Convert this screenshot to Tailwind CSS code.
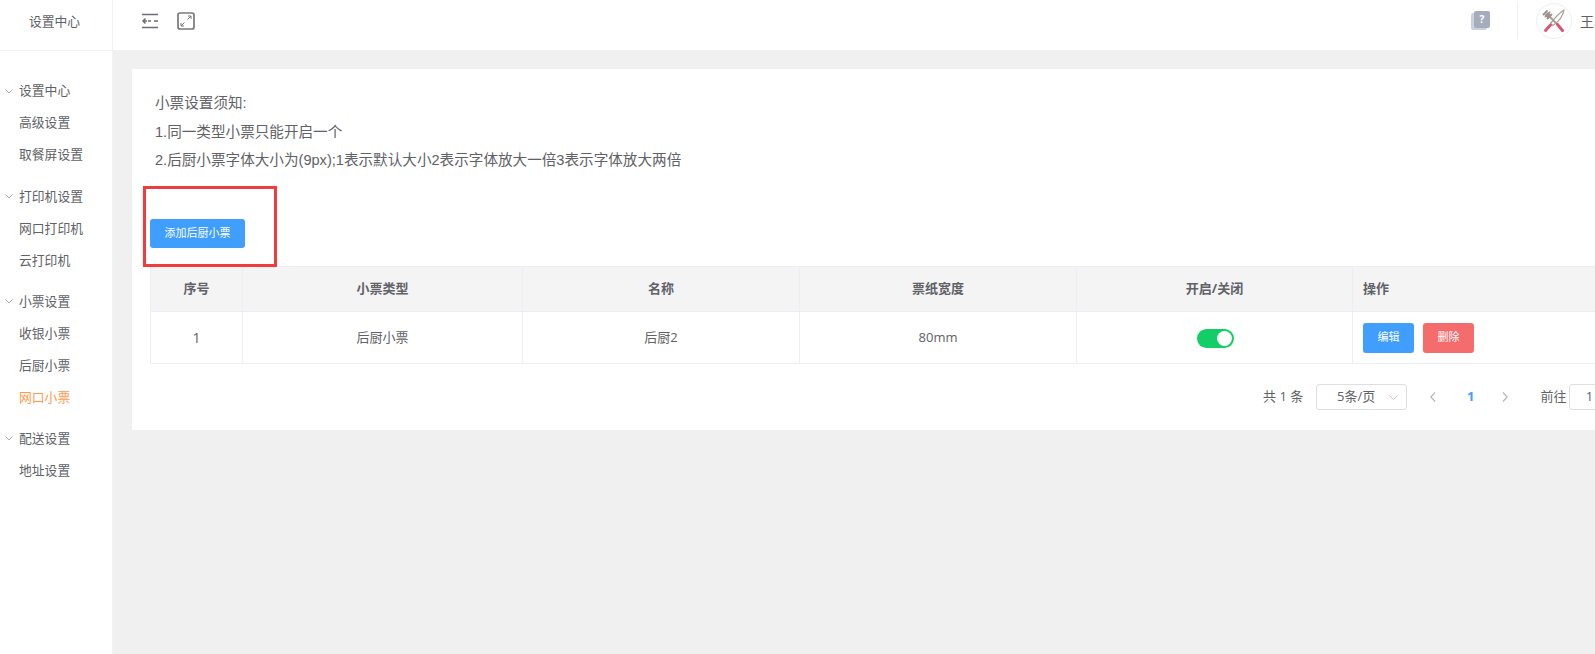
<!DOCTYPE html>
<html lang="zh">
<head>
  <meta charset="UTF-8" />
  <title>设置中心</title>
  <script src="https://cdn.jsdelivr.net/npm/@tailwindcss/browser@4"></script>
</head>
<body class="h-[654px] w-[1595px] overflow-hidden bg-[#f0f0f0] text-[#606266] font-['Open_Sans','Noto_Sans_CJK_SC',sans-serif]">
  <div class="flex h-[654px]">

    <!-- sidebar -->
    <aside class="w-[113px] shrink-0 bg-white border-r border-[#f2f2f2]">
      <div class="h-[51px] flex items-center justify-center pb-[7px] pr-[3px] text-[12.800px] border-b border-[#f2f2f2]">设置中心</div>
      <nav class="pt-[24px] flex flex-col gap-[9.300px] text-[12.800px]">
        <div>
          <div class="h-8 flex items-center gap-[6px] pl-[5px]">
            <svg class="w-[8px] h-[5px]" viewBox="0 0 8 5" fill="none" stroke="#a8abb2"><path d="M.5.5 4 4 7.5.5" /></svg>
            <span>设置中心</span>
          </div>
          <div class="h-8 flex items-center pl-[19px]">高级设置</div>
          <div class="h-8 flex items-center pl-[19px]">取餐屏设置</div>
        </div>
        <div>
          <div class="h-8 flex items-center gap-[6px] pl-[5px]">
            <svg class="w-[8px] h-[5px]" viewBox="0 0 8 5" fill="none" stroke="#a8abb2"><path d="M.5.5 4 4 7.5.5" /></svg>
            <span>打印机设置</span>
          </div>
          <div class="h-8 flex items-center pl-[19px]">网口打印机</div>
          <div class="h-8 flex items-center pl-[19px]">云打印机</div>
        </div>
        <div>
          <div class="h-8 flex items-center gap-[6px] pl-[5px]">
            <svg class="w-[8px] h-[5px]" viewBox="0 0 8 5" fill="none" stroke="#a8abb2"><path d="M.5.5 4 4 7.5.5" /></svg>
            <span>小票设置</span>
          </div>
          <div class="h-8 flex items-center pl-[19px]">收银小票</div>
          <div class="h-8 flex items-center pl-[19px]">后厨小票</div>
          <div class="h-8 flex items-center pl-[19px] text-[#ff9a4d]">网口小票</div>
        </div>
        <div>
          <div class="h-8 flex items-center gap-[6px] pl-[5px]">
            <svg class="w-[8px] h-[5px]" viewBox="0 0 8 5" fill="none" stroke="#a8abb2"><path d="M.5.5 4 4 7.5.5" /></svg>
            <span>配送设置</span>
          </div>
          <div class="h-8 flex items-center pl-[19px]">地址设置</div>
        </div>
      </nav>
    </aside>

    <div class="flex-1 min-w-0">
      <!-- top bar -->
      <header class="h-[50px] bg-white flex items-start">
        <svg class="ml-[28px] mt-[13px] w-[18px] h-[16px]" viewBox="0 0 18 16" fill="none" stroke="#6b6e74" stroke-width="1.500">
          <path d="M1 1.500h16M1 14.500h16M7 8h3M13 8h4M6 8H2M4.500 5.500 2 8l2.500 2.500" />
        </svg>
        <svg class="ml-[18px] mt-[12px] w-[18px] h-[18px]" viewBox="0 0 18 18" fill="none" stroke="#77797f">
          <rect x="1" y="1" width="16" height="16" rx="2" stroke-width="1.700" />
          <path d="M10.500 7.500 14 4M11 4h3v3M7.500 10.500 4 14M4 11v3h3" stroke-width="1" />
        </svg>
        <div class="ml-auto flex items-start">
          <div class="relative mt-[11px] w-[19px] h-[19px]">
            <div class="absolute left-0 top-[2px] w-[16px] h-[17px] rounded-[2px] bg-[#ccd2dc]"></div>
            <div class="absolute right-0 top-0 w-[16px] h-[17px] rounded-[2px] bg-[#a5adbd] text-white text-[10px] font-bold leading-[17px] text-center">?</div>
          </div>
          <div class="ml-[27px] mt-[3px] w-px h-[36px] bg-[#f0f0f0]"></div>
          <div class="ml-[18px] mt-[3px] w-[36px] h-[36px] rounded-full border border-[#eeeeee] flex items-center justify-center">
            <svg class="w-[28px] h-[28px]" viewBox="0 0 28 28" fill="none" stroke-linecap="round" stroke-linejoin="round">
              <path d="M24 3C20 5.500 14 12 10.500 16.500L13 18.500C18 15 23 9 24 3Z" fill="#ffffff" stroke="#a89f98" stroke-width="1.300" />
              <path d="M10.500 18 5.500 23.500" stroke="#dc5672" stroke-width="3" />
              <path d="M10 10 18 18" stroke="#a89f98" stroke-width="2" />
              <path d="M17.500 17.500 22.500 23.500" stroke="#dc5672" stroke-width="3" />
              <path d="M3.500 7.500 7 4M5.500 9.500 9.500 5.500M7.500 11.500 11.500 7.500" stroke="#9c918a" stroke-width="1.800" />
              <path d="M5.500 8.500 8.500 11.500 11 9 8 6Z" fill="#9c918a" stroke="#9c918a" />
            </svg>
          </div>
          <span class="ml-[8px] mt-[13px] text-[14px] leading-[18px] whitespace-nowrap w-[15px] overflow-hidden">王小</span>
        </div>
      </header>

      <!-- card -->
      <main class="relative mt-[19px] ml-[19px] w-[1500px] h-[361px] bg-white pt-[20px] pl-[18px]">
        <div class="pl-[5px] text-[14.600px] leading-[28.500px] font-['Liberation_Sans','Noto_Sans_CJK_SC',sans-serif]">
          <p>小票设置须知:</p>
          <p>1.同一类型小票只能开启一个</p>
          <p>2.后厨小票字体大小为(9px);1表示默认大小2表示字体放大一倍3表示字体放大两倍</p>
        </div>

        <button class="mt-[44.500px] block w-[95px] h-[29px] rounded-[3px] bg-[#409eff] text-white text-[11px]">添加后厨小票</button>

        <!-- red annotation box -->
        <div class="absolute left-[11px] top-[117px] w-[134px] h-[81px] border-[3px] border-[#f23c3c]"></div>

        <table class="mt-[18px] w-[1480px] border-collapse table-fixed text-[13px] text-center">
          <thead class="bg-[#f4f4f5] font-bold">
            <tr class="h-[45px]">
              <th class="w-[92px] border border-[#ebeef5]">序号</th>
              <th class="w-[280px] border border-[#ebeef5]">小票类型</th>
              <th class="w-[277px] border border-[#ebeef5]">名称</th>
              <th class="w-[277px] border border-[#ebeef5]">票纸宽度</th>
              <th class="w-[276px] border border-[#ebeef5]">开启/关闭</th>
              <th class="border border-[#ebeef5] text-left pl-[10px]">操作</th>
            </tr>
          </thead>
          <tbody>
            <tr class="h-[52px]">
              <td class="border border-[#ebeef5] text-[14px]">1</td>
              <td class="border border-[#ebeef5]">后厨小票</td>
              <td class="border border-[#ebeef5]">后厨2</td>
              <td class="border border-[#ebeef5]">80mm</td>
              <td class="border border-[#ebeef5] pl-[2px]">
                <span class="inline-flex w-[37px] h-[19px] rounded-full bg-[#13ce66] items-center justify-end pr-[2px] align-middle">
                  <span class="w-[15px] h-[15px] rounded-full bg-white"></span>
                </span>
              </td>
              <td class="border border-[#ebeef5] text-left pl-[10px]">
                <div class="flex gap-[9px]">
                  <button class="w-[51px] h-[30px] rounded-[3px] bg-[#409eff] text-white text-[11px]">编辑</button>
                  <button class="w-[51px] h-[30px] rounded-[3px] bg-[#f56c6c] text-white text-[11px]">删除</button>
                </div>
              </td>
            </tr>
          </tbody>
        </table>

        <!-- pagination -->
        <div class="mt-[20px] ml-[1113px] flex items-center h-[26px] text-[13px] whitespace-nowrap">
          <span class="w-[53px]">共 1 条</span>
          <div class="w-[91px] h-[26px] rounded-[3px] border border-[#dcdfe6] flex items-center pl-[20px] relative">
            <span>5条/页</span>
            <svg class="absolute right-[8px] top-[10px] w-[9px] h-[5px]" viewBox="0 0 9 5" fill="none" stroke="#c0c4cc"><path d="M.5.5 4.500 4.500 8.500.5" /></svg>
          </div>
          <svg class="ml-[23px] w-[6px] h-[10px]" viewBox="0 0 6 10" fill="none" stroke="#b4b7bd" stroke-width="1.200"><path d="M5 .5.8 5 5 9.500" /></svg>
          <span class="ml-[31px] font-bold text-[#409eff]">1</span>
          <svg class="ml-[28px] w-[6px] h-[10px]" viewBox="0 0 6 10" fill="none" stroke="#b4b7bd" stroke-width="1.200"><path d="M1 .5 5.200 5 1 9.500" /></svg>
          <span class="ml-[32px]">前往</span>
          <div class="ml-[3px] w-[40px] h-[26px] rounded-[3px] border border-[#dcdfe6] flex items-center justify-center shrink-0">1</div>
        </div>
      </main>
    </div>
  </div>
</body>
</html>
